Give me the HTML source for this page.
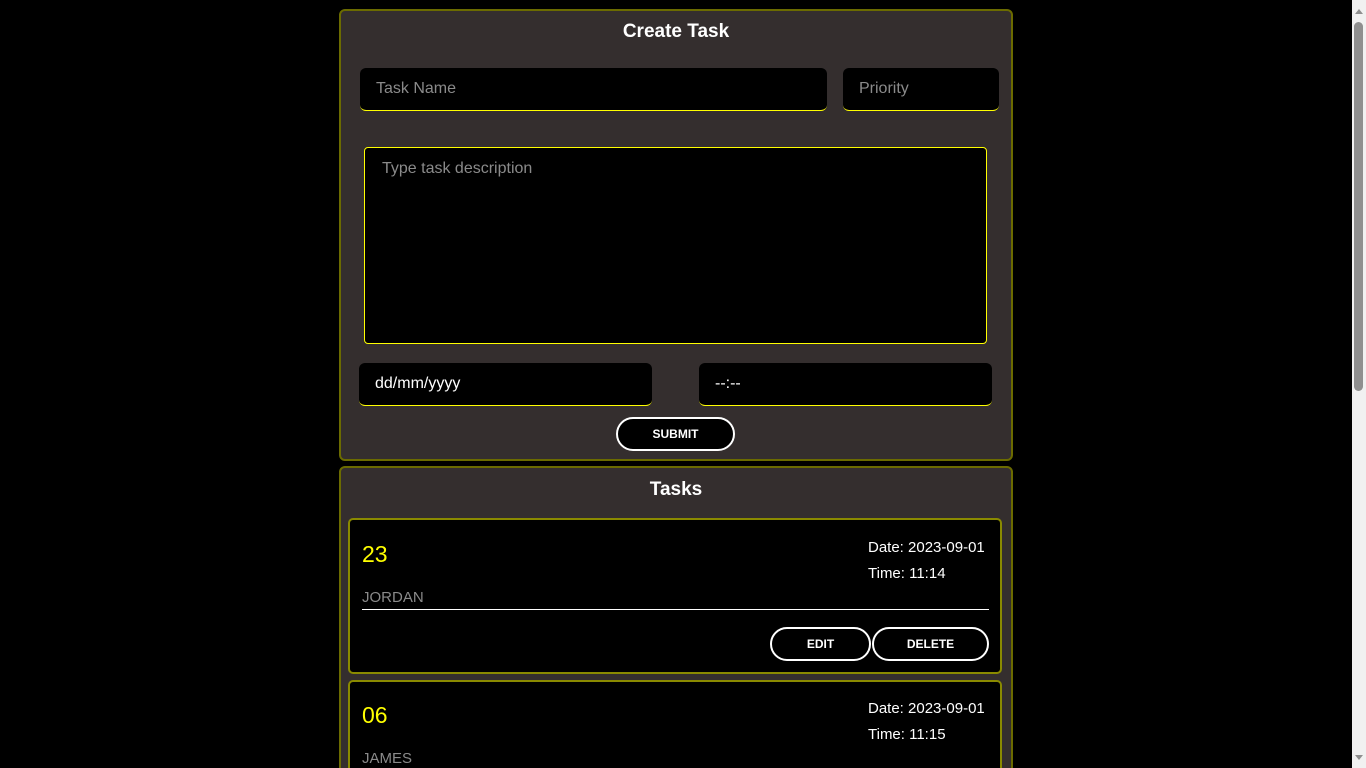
<!DOCTYPE html>
<html style="width:1366px;height:768px;overflow:hidden"><head><style>
*{box-sizing:border-box;margin:0;padding:0}
body{background:#000;width:1366px;height:768px;overflow:hidden;position:relative;font-family:"Liberation Sans",sans-serif;color:#fff}
.a{position:absolute}
.panel{background:#342e2e;border:2px solid #6b6b00;border-radius:6px}
.inp{background:#000;border-radius:6px;border-bottom:1px solid #ffff00;font-size:16px;color:#8a8a8a;padding-left:16px;display:flex;align-items:center}
.btn{border:2px solid #fff;border-radius:18px;font-size:12px;font-weight:bold;display:flex;align-items:center;justify-content:center;background:#000;color:#fff}
.card{background:#000;border:2px solid #8a8a00;border-radius:5px}
h2{font-size:19px;font-weight:bold;text-align:center}
</style></head><body>
<div class="a panel" style="left:339px;top:9px;width:674px;height:452px"></div>
<div class="a" style="left:339px;top:21px;width:674px"><h2>Create Task</h2></div>
<div class="a inp" style="left:360px;top:68px;width:467px;height:43px">Task Name</div>
<div class="a inp" style="left:843px;top:68px;width:156px;height:43px">Priority</div>
<div class="a" style="left:364px;top:147px;width:623px;height:197px;background:#000;border:1px solid #ffff00;border-radius:4px;color:#8a8a8a;font-size:16px;padding:12px 17px">Type task description</div>
<div class="a inp" style="left:359px;top:363px;width:293px;height:43px;color:#fff">dd/mm/yyyy</div>
<div class="a inp" style="left:699px;top:363px;width:293px;height:43px;color:#fff">--:--</div>
<div class="a btn" style="left:616px;top:417px;width:119px;height:34px">SUBMIT</div>

<div class="a" style="left:0;top:0;width:1366px;height:768px;overflow:hidden">
<div class="a panel" style="left:339px;top:466px;width:674px;height:320px"></div>
<div class="a" style="left:339px;top:479px;width:674px"><h2>Tasks</h2></div>

<div class="a card" style="left:348px;top:518px;width:654px;height:156px"></div>
<div class="a" style="left:362px;top:541px;font-size:23px;color:#ffff00">23</div>
<div class="a" style="left:868px;top:535px;font-size:15px;line-height:26px">Date: 2023-09-01<br>Time: 11:14</div>
<div class="a" style="left:362px;top:589px;font-size:15px;color:#8a8a8a">JORDAN</div>
<div class="a" style="left:362px;top:609px;width:627px;height:1px;background:#fff"></div>
<div class="a btn" style="left:770px;top:627px;width:101px;height:34px">EDIT</div>
<div class="a btn" style="left:872px;top:627px;width:117px;height:34px">DELETE</div>

<div class="a card" style="left:348px;top:680px;width:654px;height:120px"></div>
<div class="a" style="left:362px;top:702px;font-size:23px;color:#ffff00">06</div>
<div class="a" style="left:868px;top:696px;font-size:15px;line-height:26px">Date: 2023-09-01<br>Time: 11:15</div>
<div class="a" style="left:362px;top:750px;font-size:15px;color:#8a8a8a">JAMES</div>
</div>

<div class="a" style="left:1352px;top:0;width:14px;height:768px;background:#f1f1f1"></div>
<div class="a" style="left:1354px;top:22px;width:9px;height:369px;background:#8f8f8f;border-radius:5px"></div>
<div class="a" style="left:1355px;top:9px;width:0;height:0;border-left:4px solid transparent;border-right:4px solid transparent;border-bottom:5px solid #8f8f8f"></div>
<div class="a" style="left:1355px;top:755px;width:0;height:0;border-left:4px solid transparent;border-right:4px solid transparent;border-top:5px solid #8f8f8f"></div>
</body></html>
